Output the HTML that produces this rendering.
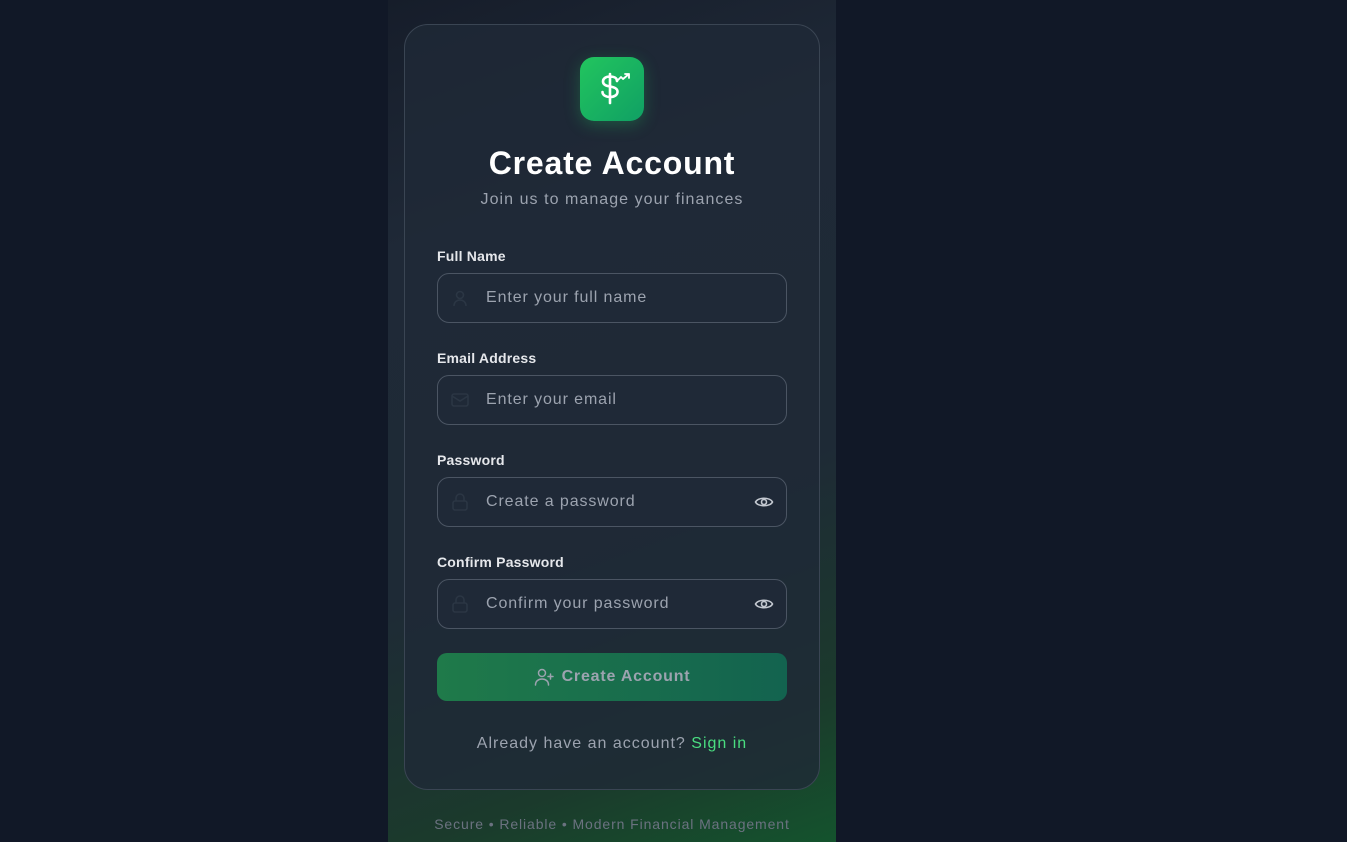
<!DOCTYPE html>
<html><head><meta charset="utf-8"><style>
*{box-sizing:border-box;margin:0;padding:0}
body{width:1347px;height:842px;background:#111827;font-family:"Liberation Sans",sans-serif;overflow:hidden;position:relative}
.col{position:absolute;left:388px;top:0;width:448px;height:842px;background:linear-gradient(160deg,#161d2a 0%,#1f2937 25%,#1e2a36 60%,#1b3a2c 85%,#14532d 100%)}
.card{position:absolute;left:404px;top:24px;width:416px;height:766px;border-radius:24px;border:1px solid #3a4553;background:rgba(31,41,55,.8)}
.logo{position:absolute;left:175px;top:32px;width:64px;height:64px;border-radius:14px;background:linear-gradient(135deg,#22c55e,#10a064);box-shadow:0 4px 16px rgba(34,197,94,.3)}
h1{position:absolute;left:0;width:100%;top:120px;text-align:center;color:#fff;font-size:32px;font-weight:900;letter-spacing:.8px}
.sub{position:absolute;left:0;width:100%;top:166px;text-align:center;color:#9ca3af;font-size:16px;letter-spacing:1.05px}
.lbl{position:absolute;left:32px;color:#e5e7eb;font-size:14px;font-weight:bold;letter-spacing:.2px}
.inp{position:absolute;left:32px;width:350px;height:50px;border:1px solid #4b5563;border-radius:12px;background:#1f2937}
.inp span{position:absolute;left:48px;top:15px;color:#9ca3af;font-size:16px;letter-spacing:.9px}
.ic{position:absolute;left:12px;top:14px}
.eye{position:absolute;right:12px;top:16px}
.btn{position:absolute;left:32px;top:628px;width:350px;height:48px;border-radius:10px;background:linear-gradient(90deg,#1f7a4a,#13634f);color:#9ca3af;font-weight:bold;font-size:16px;letter-spacing:.8px;display:flex;align-items:center;justify-content:center;gap:8px}
.al{position:absolute;left:0;width:100%;top:710px;text-align:center;color:#9ca3af;font-size:16px;letter-spacing:1px}
.al b{color:#4ade80;font-weight:normal}
.ft{position:absolute;left:388px;width:448px;top:816px;text-align:center;color:#6b7280;font-size:14px;letter-spacing:.9px}
</style></head><body>
<div class="col"></div>
<div class="card">
<div class="logo"><svg width="64" height="64" viewBox="0 0 64 64" fill="none" stroke="#fff" stroke-width="2.6" stroke-linecap="round" stroke-linejoin="round"><path d="M30 17v29M37 24c0-3-3-4.5-7-4.5s-7 1.8-7 5 3.5 4.5 7 5 7.5 1.8 7.5 5.2-3.5 5.3-7.5 5.3-7.5-1.8-7.5-5"/><path d="M38 23l3-3 2 2 6-5M45 17h4v4" stroke-width="1.8"/></svg></div>
<h1>Create Account</h1>
<div class="sub">Join us to manage your finances</div>
<div class="lbl" style="top:223px">Full Name</div>
<div class="inp" style="top:248px"><svg class="ic" width="20" height="20" viewBox="0 0 20 20" fill="none" stroke="#2b3644" stroke-width="1.6"><circle cx="10" cy="7" r="3.5"/><path d="M4 18c0-4 3-6 6-6s6 2 6 6"/></svg><span>Enter your full name</span></div>
<div class="lbl" style="top:325px">Email Address</div>
<div class="inp" style="top:350px"><svg class="ic" width="20" height="20" viewBox="0 0 20 20" fill="none" stroke="#2b3644" stroke-width="1.6"><rect x="2" y="4" width="16" height="12" rx="2"/><path d="M2 6l8 5 8-5"/></svg><span>Enter your email</span></div>
<div class="lbl" style="top:427px">Password</div>
<div class="inp" style="top:452px"><svg class="ic" width="20" height="20" viewBox="0 0 20 20" fill="none" stroke="#2b3644" stroke-width="1.6"><rect x="3" y="9" width="14" height="9" rx="2"/><path d="M6 9V6a4 4 0 0 1 8 0v3"/></svg><span>Create a password</span><svg class="eye" width="20" height="16" viewBox="0 0 20 16" fill="none" stroke="#c4c9d1" stroke-width="1.6"><path d="M1.5 8C4 3 16 3 18.5 8 16 13 4 13 1.5 8Z"/><circle cx="10" cy="8" r="2.5"/></svg></div>
<div class="lbl" style="top:529px">Confirm Password</div>
<div class="inp" style="top:554px"><svg class="ic" width="20" height="20" viewBox="0 0 20 20" fill="none" stroke="#2b3644" stroke-width="1.6"><rect x="3" y="9" width="14" height="9" rx="2"/><path d="M6 9V6a4 4 0 0 1 8 0v3"/></svg><span>Confirm your password</span><svg class="eye" width="20" height="16" viewBox="0 0 20 16" fill="none" stroke="#c4c9d1" stroke-width="1.6"><path d="M1.5 8C4 3 16 3 18.5 8 16 13 4 13 1.5 8Z"/><circle cx="10" cy="8" r="2.5"/></svg></div>
<div class="btn"><svg width="20" height="18" viewBox="0 0 20 18" fill="none" stroke="#9ca3af" stroke-width="1.5" stroke-linecap="round"><circle cx="8" cy="5" r="3.5"/><path d="M1.5 17c0-4 3-6 6.5-6s6.5 2 6.5 6M16.5 6v5M14 8.5h5"/></svg>Create Account</div>
<div class="al">Already have an account? <b>Sign in</b></div>
</div>
<div class="ft">Secure • Reliable • Modern Financial Management</div>
</body></html>
